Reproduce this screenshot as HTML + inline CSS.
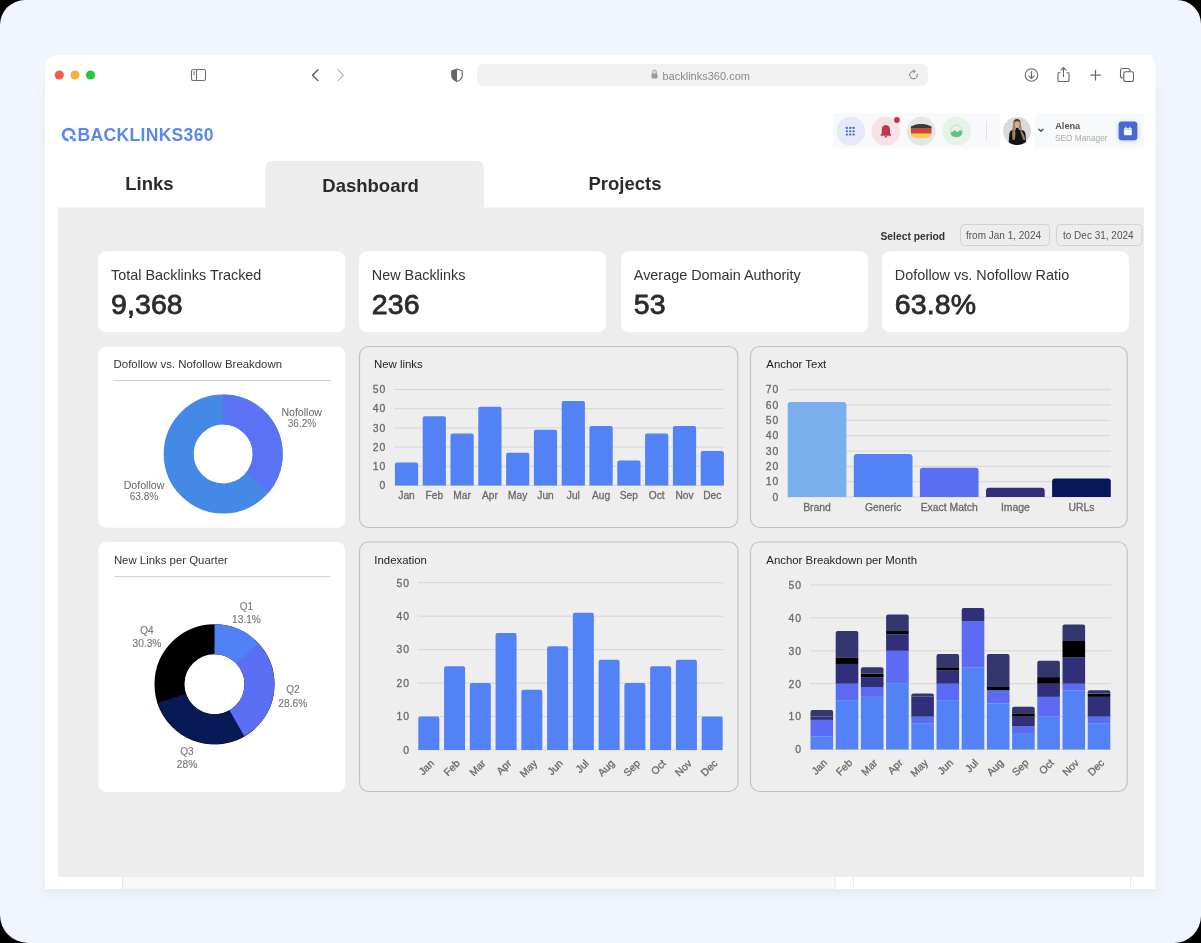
<!DOCTYPE html>
<html><head><meta charset="utf-8"><title>Backlinks360 Dashboard</title>
<style>
html,body{margin:0;padding:0;width:1201px;height:943px;overflow:hidden;background:#000;}
svg{display:block;font-family:"Liberation Sans", sans-serif;will-change:transform;}
</style></head><body>
<svg width="1201" height="943" viewBox="0 0 1201 943">
<defs>
<filter id="sh" x="-10%" y="-10%" width="120%" height="130%"><feGaussianBlur stdDeviation="5"/></filter>
<filter id="bsh" x="-50%" y="-50%" width="200%" height="200%"><feDropShadow dx="0" dy="1" stdDeviation="2" flood-color="#4767d4" flood-opacity="0.3"/></filter>
</defs>
<rect x="0" y="0" width="1201" height="943" fill="#000"/>
<path d="M0,25 A25,25 0 0 1 25,0 L1177,0 A24,24 0 0 1 1201,24 L1201,916 A27,27 0 0 1 1174,943 L28,943 A28,28 0 0 1 0,915 Z" fill="#f1f5fd"/>
<rect x="44" y="85" width="1114" height="810" fill="#e1e6f3" filter="url(#sh)" opacity="0.75"/>
<path d="M45,69 Q45,55 59,55 L1152,55 L1155.5,64 L1155.5,889 L45,889 Z" fill="#fff"/>
<circle cx="59.3" cy="75" r="4.6" fill="#f25a55"/>
<circle cx="75" cy="75" r="4.6" fill="#f6b23e"/>
<circle cx="90.5" cy="75" r="4.6" fill="#27c840"/>
<rect x="191.5" y="69.5" width="14" height="11" rx="1.8" fill="none" stroke="#6e6e6e" stroke-width="1.1"/>
<line x1="196.5" y1="69.5" x2="196.5" y2="80.5" stroke="#6e6e6e" stroke-width="1.1"/>
<rect x="193" y="71.6" width="2" height="1" fill="#6e6e6e"/><rect x="193" y="73.6" width="2" height="1" fill="#6e6e6e"/>
<path d="M318,69.8 L312.6,75.2 L318,80.6" fill="none" stroke="#555" stroke-width="1.3" stroke-linecap="round" stroke-linejoin="round"/>
<path d="M338,69.8 L343.4,75.2 L338,80.6" fill="none" stroke="#bbb" stroke-width="1.3" stroke-linecap="round" stroke-linejoin="round"/>
<path d="M457,69 L462.2,70.8 L462.2,75.5 Q462.2,79.5 457,81.6 Q451.8,79.5 451.8,75.5 L451.8,70.8 Z" fill="#fff" stroke="#666" stroke-width="1.1"/>
<path d="M457,69 L451.8,70.8 L451.8,75.5 Q451.8,79.5 457,81.6 Z" fill="#666"/>
<rect x="477.00" y="64.00" width="451.00" height="22.00" rx="6" fill="#f1f1f1" />
<rect x="651.5" y="73.5" width="6" height="5" rx="1" fill="#9a9a9a"/>
<path d="M652.8,73.8 L652.8,72 Q652.8,70 654.5,70 Q656.2,70 656.2,72 L656.2,73.8" fill="none" stroke="#9a9a9a" stroke-width="1.1"/>
<text x="662.50" y="79.80" font-size="11" fill="#8c8888" font-weight="normal" text-anchor="start" >backlinks360.com</text>
<path d="M917.2,74 A3.8,3.8 0 1 1 914.2,71.3" fill="none" stroke="#777" stroke-width="1"/>
<path d="M913,69.6 L915.3,71.3 L913.3,73.3" fill="none" stroke="#777" stroke-width="1"/>
<circle cx="1031.5" cy="75" r="6.3" fill="none" stroke="#666" stroke-width="1.1"/>
<path d="M1031.5,71.5 L1031.5,78.3 M1028.9,75.8 L1031.5,78.4 L1034.1,75.8" fill="none" stroke="#666" stroke-width="1.1" stroke-linecap="round"/>
<path d="M1060.5,72.8 L1058.5,72.8 Q1058,72.8 1058,73.5 L1058,80.8 Q1058,81.5 1058.7,81.5 L1068.3,81.5 Q1069,81.5 1069,80.8 L1069,73.5 Q1069,72.8 1068.5,72.8 L1066.5,72.8" fill="none" stroke="#666" stroke-width="1.1"/>
<path d="M1063.5,76.5 L1063.5,67.8 M1061,70.2 L1063.5,67.6 L1066,70.2" fill="none" stroke="#666" stroke-width="1.1" stroke-linecap="round"/>
<path d="M1095.5,70 L1095.5,80.5 M1090.2,75.2 L1100.8,75.2" stroke="#666" stroke-width="1.2"/>
<rect x="1120.5" y="68.5" width="9.5" height="9.5" rx="2" fill="#fff" stroke="#666" stroke-width="1.1"/>
<rect x="1123.8" y="71.8" width="9.7" height="9.7" rx="2" fill="#fff" stroke="#666" stroke-width="1.1"/>
<circle cx="68.6" cy="134.6" r="5.5" fill="none" stroke="#5b87f0" stroke-width="2.8" stroke-dasharray="25.9 8.64" transform="rotate(90 68.6 134.6)"/>
<rect x="69.70" y="136.10" width="3.30" height="3.00" rx="0" fill="#5b87f0" />
<rect x="72.50" y="138.40" width="3.20" height="2.90" rx="0" fill="#5b87f0" />
<text x="77.60" y="141.10" font-size="17.5" fill="#5b87f0" font-weight="bold" text-anchor="start" letter-spacing="0.33">BACKLINKS360</text>
<rect x="833.00" y="113.00" width="167.00" height="35.50" rx="0" fill="#f8f9fb" />
<rect x="1034.70" y="113.00" width="109.30" height="35.50" rx="0" fill="#f8f9fb" />
<circle cx="850.7" cy="131.2" r="14.4" fill="#e6eaf6"/>
<rect x="845.80" y="126.80" width="2.10" height="2.10" rx="0.4" fill="#4a6ad8" />
<rect x="845.80" y="130.15" width="2.10" height="2.10" rx="0.4" fill="#4a6ad8" />
<rect x="845.80" y="133.50" width="2.10" height="2.10" rx="0.4" fill="#4a6ad8" />
<rect x="849.15" y="126.80" width="2.10" height="2.10" rx="0.4" fill="#4a6ad8" />
<rect x="849.15" y="130.15" width="2.10" height="2.10" rx="0.4" fill="#4a6ad8" />
<rect x="849.15" y="133.50" width="2.10" height="2.10" rx="0.4" fill="#4a6ad8" />
<rect x="852.50" y="126.80" width="2.10" height="2.10" rx="0.4" fill="#4a6ad8" />
<rect x="852.50" y="130.15" width="2.10" height="2.10" rx="0.4" fill="#4a6ad8" />
<rect x="852.50" y="133.50" width="2.10" height="2.10" rx="0.4" fill="#4a6ad8" />
<circle cx="885.8" cy="131.2" r="14.4" fill="#f5e3e8"/>
<path d="M880.5,135.7 L891.2,135.7 L891,134.6 L890,133.6 L890,128.5 Q889.8,126 887,125.3 Q885.8,124.6 884.6,125.3 Q881.9,126 881.8,128.5 L881.8,133.6 L880.7,134.6 Z" fill="#c8344f"/>
<path d="M884.6,136 L887,136 L886.6,137.6 L885,137.6 Z" fill="#c8344f"/>
<circle cx="896.9" cy="120" r="2.9" fill="#c8344f"/>
<circle cx="921.3" cy="131.2" r="14.4" fill="#e6e6e6"/>
<clipPath id="flag"><path d="M910.7,126.5 Q921.2,121.2 931.7,126.5 L931.7,136 Q921.2,141.2 910.7,136 Z"/></clipPath>
<g clip-path="url(#flag)"><rect x="910.7" y="123.7" width="21" height="5" fill="#3a3a3a"/><rect x="910.7" y="128.7" width="21" height="5" fill="#dd3f33"/><rect x="910.7" y="133.7" width="21" height="5" fill="#f3cf4f"/></g>
<circle cx="956.7" cy="131.2" r="14.4" fill="#e5f3e9"/>
<circle cx="956.4" cy="131.1" r="5.9" fill="none" stroke="#a8dcb6" stroke-width="0.8"/>
<path d="M950.6,132.4 Q952.5,132.3 953.6,130.9 Q954.8,129.6 956,130.9 L957.4,132.4 L958.9,130.9 Q960.1,129.7 961.3,130.7 L962.2,131.6 Q962.2,137.1 956.4,137.1 Q950.8,137 950.6,132.4 Z" fill="#63c283"/>
<line x1="986.5" y1="121.5" x2="986.5" y2="140" stroke="#e2e2e2" stroke-width="1"/>
<circle cx="1017" cy="131" r="14" fill="#d9d9de"/>
<clipPath id="av"><circle cx="1017" cy="131" r="14"/></clipPath>
<g clip-path="url(#av)"><path d="M1008.5,146 L1009.3,134 Q1010,130.2 1013,129.8 L1021,129.8 Q1024.8,130.2 1025.5,134 L1026.5,146 Z" fill="#141414"/><path d="M1012.4,139.8 L1012.2,133 L1013,124.5 Q1013.3,119.2 1017,119 Q1020.6,119.2 1021,124.5 L1021.8,131 L1024,135 L1025.6,140.2 L1023,139.5 L1020.6,132 L1019.8,128.5 L1015,128.5 L1015.6,134 L1014.6,140 Z" fill="#9f8260"/><path d="M1013.2,123 Q1013.6,119.2 1017,119 Q1020.4,119.2 1020.8,123 L1019.8,121.6 Q1017,120.4 1014.2,121.6 Z" fill="#4e3f30"/><ellipse cx="1017.2" cy="124.8" rx="2.3" ry="3.2" fill="#cfae98"/><rect x="1015.8" y="128" width="2.8" height="18" fill="#141414"/></g>
<path d="M1038.8,129.2 L1040.9,131.2 L1043,129.2" fill="none" stroke="#555" stroke-width="1.5" stroke-linecap="round"/>
<text x="1055.20" y="128.60" font-size="9.2" fill="#555" font-weight="bold" text-anchor="start" >Alena</text>
<text x="1055.00" y="141.00" font-size="8.3" fill="#aaa" font-weight="normal" text-anchor="start" >SEO Manager</text>
<rect x="1118.6" y="121.5" width="18.7" height="18.7" rx="3" fill="#4767d4" filter="url(#bsh)"/>
<rect x="1123.9" y="128.2" width="7.9" height="7.1" rx="0.7" fill="#fff"/>
<rect x="1125.3" y="126.8" width="1.1" height="2" fill="#fff"/><rect x="1129.3" y="126.8" width="1.1" height="2" fill="#fff"/>
<rect x="1123.9" y="129.5" width="7.9" height="0.6" fill="#8fa2e6"/>
<text x="125.20" y="190.20" font-size="18.5" fill="#2b2b2b" font-weight="bold" text-anchor="start" >Links</text>
<path d="M265.20,208.30 L265.20,168.80 Q265.20,160.80 273.20,160.80 L476.00,160.80 Q484.00,160.80 484.00,168.80 L484.00,208.30 Z" fill="#ededed"/>
<text x="322.30" y="191.60" font-size="18.5" fill="#2b2b2b" font-weight="bold" text-anchor="start" >Dashboard</text>
<text x="588.50" y="190.20" font-size="18.5" fill="#2b2b2b" font-weight="bold" text-anchor="start" >Projects</text>
<rect x="58.00" y="207.50" width="1086.00" height="669.50" rx="0" fill="#ededed" />
<rect x="122.50" y="877.00" width="712.50" height="12.00" rx="0" fill="#f8f8f8" />
<line x1="122.5" y1="877" x2="122.5" y2="889" stroke="#e6e6e6" stroke-width="1"/>
<line x1="835" y1="877" x2="835" y2="889" stroke="#e6e6e6" stroke-width="1"/>
<line x1="853.3" y1="877" x2="853.3" y2="889" stroke="#e6e6e6" stroke-width="1"/>
<line x1="1130.6" y1="877" x2="1130.6" y2="889" stroke="#e6e6e6" stroke-width="1"/>
<text x="880.50" y="240.40" font-size="10.3" fill="#333" font-weight="bold" text-anchor="start" >Select period</text>
<rect x="960.50" y="224.50" width="89.00" height="21.00" rx="4" fill="none" stroke="#d2d2d2" stroke-width="1"/>
<text x="966.00" y="238.60" font-size="10" fill="#555" font-weight="normal" text-anchor="start" >from Jan 1, 2024</text>
<rect x="1056.50" y="224.50" width="85.50" height="21.00" rx="4" fill="none" stroke="#d2d2d2" stroke-width="1"/>
<text x="1063.00" y="238.60" font-size="10" fill="#555" font-weight="normal" text-anchor="start" >to Dec 31, 2024</text>
<rect x="98.20" y="251.30" width="247.00" height="81.00" rx="8" fill="#fff" />
<text x="111.00" y="279.80" font-size="14.4" fill="#333" font-weight="normal" text-anchor="start" >Total Backlinks Tracked</text>
<text x="111.00" y="313.80" font-size="28.5" fill="#2b2b2b" font-weight="normal" text-anchor="start" letter-spacing="0.1" stroke="#2b2b2b" stroke-width="0.8">9,368</text>
<rect x="359.00" y="251.30" width="247.00" height="81.00" rx="8" fill="#fff" />
<text x="371.80" y="279.80" font-size="14.4" fill="#333" font-weight="normal" text-anchor="start" >New Backlinks</text>
<text x="371.80" y="313.80" font-size="28.5" fill="#2b2b2b" font-weight="normal" text-anchor="start" letter-spacing="0.1" stroke="#2b2b2b" stroke-width="0.8">236</text>
<rect x="621.00" y="251.30" width="247.00" height="81.00" rx="8" fill="#fff" />
<text x="633.80" y="279.80" font-size="14.4" fill="#333" font-weight="normal" text-anchor="start" >Average Domain Authority</text>
<text x="633.80" y="313.80" font-size="28.5" fill="#2b2b2b" font-weight="normal" text-anchor="start" letter-spacing="0.1" stroke="#2b2b2b" stroke-width="0.8">53</text>
<rect x="882.00" y="251.30" width="247.00" height="81.00" rx="8" fill="#fff" />
<text x="894.80" y="279.80" font-size="14.4" fill="#333" font-weight="normal" text-anchor="start" >Dofollow vs. Nofollow Ratio</text>
<text x="894.80" y="313.80" font-size="28.5" fill="#2b2b2b" font-weight="normal" text-anchor="start" letter-spacing="0.1" stroke="#2b2b2b" stroke-width="0.8">63.8%</text>
<rect x="98.30" y="346.70" width="246.90" height="181.00" rx="8" fill="#fff" />
<text x="113.60" y="368.10" font-size="11.4" fill="#333" font-weight="normal" text-anchor="start" >Dofollow vs. Nofollow Breakdown</text>
<line x1="113.6" y1="380.5" x2="331" y2="380.5" stroke="#cfcfcf" stroke-width="1"/>
<circle cx="223.2" cy="454" r="44.5" fill="none" stroke="#4589e6" stroke-width="30"/>
<path d="M223.20,394.50 A59.5,59.5 0 0 1 268.58,492.48 L245.70,473.08 A29.5,29.5 0 0 0 223.20,424.50 Z" fill="#5b72f5"/>
<text x="301.70" y="415.80" font-size="10.6" fill="#666" font-weight="normal" text-anchor="middle" >Nofollow</text>
<text x="302.00" y="427.00" font-size="10" fill="#666" font-weight="normal" text-anchor="middle" >36.2%</text>
<text x="144.00" y="489.00" font-size="10.6" fill="#666" font-weight="normal" text-anchor="middle" >Dofollow</text>
<text x="144.00" y="500.00" font-size="10" fill="#666" font-weight="normal" text-anchor="middle" >63.8%</text>
<rect x="98.40" y="542.00" width="246.60" height="250.00" rx="8" fill="#fff" />
<text x="113.90" y="563.90" font-size="11.4" fill="#333" font-weight="normal" text-anchor="start" >New Links per Quarter</text>
<line x1="114" y1="576.6" x2="330" y2="576.6" stroke="#cfcfcf" stroke-width="1"/>
<circle cx="214.5" cy="684.3" r="45" fill="none" stroke="#000" stroke-width="30"/>
<path d="M214.50,624.30 A60,60 0 0 1 259.06,644.12 L236.78,664.21 A30,30 0 0 0 214.50,654.30 Z" fill="#5081f5"/>
<path d="M258.50,643.50 A60,60 0 0 1 243.66,736.74 L229.08,710.52 A30,30 0 0 0 236.50,663.90 Z" fill="#5b6ff5"/>
<path d="M244.39,736.32 A60,60 0 0 1 157.53,703.12 L186.01,693.71 A30,30 0 0 0 229.45,710.31 Z" fill="#071a55"/>
<text x="246.50" y="609.50" font-size="10" fill="#7a7a7a" font-weight="normal" text-anchor="middle" stroke="#7a7a7a" stroke-width="0.15">Q1</text>
<text x="246.50" y="622.50" font-size="10.2" fill="#777" font-weight="normal" text-anchor="middle" stroke="#777" stroke-width="0.15">13.1%</text>
<text x="292.80" y="693.00" font-size="10" fill="#7a7a7a" font-weight="normal" text-anchor="middle" stroke="#7a7a7a" stroke-width="0.15">Q2</text>
<text x="292.80" y="706.50" font-size="10.2" fill="#777" font-weight="normal" text-anchor="middle" stroke="#777" stroke-width="0.15">28.6%</text>
<text x="187.00" y="755.00" font-size="10" fill="#7a7a7a" font-weight="normal" text-anchor="middle" stroke="#7a7a7a" stroke-width="0.15">Q3</text>
<text x="187.00" y="768.00" font-size="10.2" fill="#777" font-weight="normal" text-anchor="middle" stroke="#777" stroke-width="0.15">28%</text>
<text x="147.00" y="633.50" font-size="10" fill="#7a7a7a" font-weight="normal" text-anchor="middle" stroke="#7a7a7a" stroke-width="0.15">Q4</text>
<text x="147.00" y="646.50" font-size="10.2" fill="#777" font-weight="normal" text-anchor="middle" stroke="#777" stroke-width="0.15">30.3%</text>
<rect x="359.50" y="346.50" width="378.30" height="181.00" rx="9" fill="#eeeeee" stroke="#c2c2c2" stroke-width="1.2"/>
<rect x="750.50" y="346.50" width="376.70" height="181.00" rx="9" fill="#eeeeee" stroke="#c2c2c2" stroke-width="1.2"/>
<rect x="359.50" y="542.00" width="378.50" height="249.50" rx="9" fill="#eeeeee" stroke="#c2c2c2" stroke-width="1.2"/>
<rect x="750.50" y="542.00" width="376.70" height="249.50" rx="9" fill="#eeeeee" stroke="#c2c2c2" stroke-width="1.2"/>
<text x="374.00" y="368.30" font-size="11.4" fill="#222" font-weight="normal" text-anchor="start" >New links</text>
<line x1="394.3" y1="485.40" x2="724" y2="485.40" stroke="#d6d6d6" stroke-width="1"/>
<line x1="394.3" y1="466.22" x2="724" y2="466.22" stroke="#d6d6d6" stroke-width="1"/>
<line x1="394.3" y1="447.04" x2="724" y2="447.04" stroke="#d6d6d6" stroke-width="1"/>
<line x1="394.3" y1="427.86" x2="724" y2="427.86" stroke="#d6d6d6" stroke-width="1"/>
<line x1="394.3" y1="408.68" x2="724" y2="408.68" stroke="#d6d6d6" stroke-width="1"/>
<line x1="394.3" y1="389.50" x2="724" y2="389.50" stroke="#d6d6d6" stroke-width="1"/>
<text x="386.20" y="489.20" font-size="10.4" fill="#6a6a6a" font-weight="normal" text-anchor="end" letter-spacing="1.0" stroke="#6a6a6a" stroke-width="0.3">0</text>
<text x="386.20" y="470.02" font-size="10.4" fill="#6a6a6a" font-weight="normal" text-anchor="end" letter-spacing="1.0" stroke="#6a6a6a" stroke-width="0.3">10</text>
<text x="386.20" y="450.84" font-size="10.4" fill="#6a6a6a" font-weight="normal" text-anchor="end" letter-spacing="1.0" stroke="#6a6a6a" stroke-width="0.3">20</text>
<text x="386.20" y="431.66" font-size="10.4" fill="#6a6a6a" font-weight="normal" text-anchor="end" letter-spacing="1.0" stroke="#6a6a6a" stroke-width="0.3">30</text>
<text x="386.20" y="412.48" font-size="10.4" fill="#6a6a6a" font-weight="normal" text-anchor="end" letter-spacing="1.0" stroke="#6a6a6a" stroke-width="0.3">40</text>
<text x="386.20" y="393.30" font-size="10.4" fill="#6a6a6a" font-weight="normal" text-anchor="end" letter-spacing="1.0" stroke="#6a6a6a" stroke-width="0.3">50</text>
<path d="M394.90,485.40 L394.90,464.38 Q394.90,462.38 396.90,462.38 L416.10,462.38 Q418.10,462.38 418.10,464.38 L418.10,485.40 Z" fill="#5282f5"/>
<text x="406.50" y="499.00" font-size="10.2" fill="#6a6a6a" font-weight="normal" text-anchor="middle" stroke="#6a6a6a" stroke-width="0.3">Jan</text>
<path d="M422.70,485.40 L422.70,418.35 Q422.70,416.35 424.70,416.35 L443.90,416.35 Q445.90,416.35 445.90,418.35 L445.90,485.40 Z" fill="#5282f5"/>
<text x="434.30" y="499.00" font-size="10.2" fill="#6a6a6a" font-weight="normal" text-anchor="middle" stroke="#6a6a6a" stroke-width="0.3">Feb</text>
<path d="M450.50,485.40 L450.50,435.61 Q450.50,433.61 452.50,433.61 L471.70,433.61 Q473.70,433.61 473.70,435.61 L473.70,485.40 Z" fill="#5282f5"/>
<text x="462.10" y="499.00" font-size="10.2" fill="#6a6a6a" font-weight="normal" text-anchor="middle" stroke="#6a6a6a" stroke-width="0.3">Mar</text>
<path d="M478.30,485.40 L478.30,408.76 Q478.30,406.76 480.30,406.76 L499.50,406.76 Q501.50,406.76 501.50,408.76 L501.50,485.40 Z" fill="#5282f5"/>
<text x="489.90" y="499.00" font-size="10.2" fill="#6a6a6a" font-weight="normal" text-anchor="middle" stroke="#6a6a6a" stroke-width="0.3">Apr</text>
<path d="M506.10,485.40 L506.10,454.79 Q506.10,452.79 508.10,452.79 L527.30,452.79 Q529.30,452.79 529.30,454.79 L529.30,485.40 Z" fill="#5282f5"/>
<text x="517.70" y="499.00" font-size="10.2" fill="#6a6a6a" font-weight="normal" text-anchor="middle" stroke="#6a6a6a" stroke-width="0.3">May</text>
<path d="M533.90,485.40 L533.90,431.78 Q533.90,429.78 535.90,429.78 L555.10,429.78 Q557.10,429.78 557.10,431.78 L557.10,485.40 Z" fill="#5282f5"/>
<text x="545.50" y="499.00" font-size="10.2" fill="#6a6a6a" font-weight="normal" text-anchor="middle" stroke="#6a6a6a" stroke-width="0.3">Jun</text>
<path d="M561.70,485.40 L561.70,403.01 Q561.70,401.01 563.70,401.01 L582.90,401.01 Q584.90,401.01 584.90,403.01 L584.90,485.40 Z" fill="#5282f5"/>
<text x="573.30" y="499.00" font-size="10.2" fill="#6a6a6a" font-weight="normal" text-anchor="middle" stroke="#6a6a6a" stroke-width="0.3">Jul</text>
<path d="M589.50,485.40 L589.50,427.94 Q589.50,425.94 591.50,425.94 L610.70,425.94 Q612.70,425.94 612.70,427.94 L612.70,485.40 Z" fill="#5282f5"/>
<text x="601.10" y="499.00" font-size="10.2" fill="#6a6a6a" font-weight="normal" text-anchor="middle" stroke="#6a6a6a" stroke-width="0.3">Aug</text>
<path d="M617.30,485.40 L617.30,462.47 Q617.30,460.47 619.30,460.47 L638.50,460.47 Q640.50,460.47 640.50,462.47 L640.50,485.40 Z" fill="#5282f5"/>
<text x="628.90" y="499.00" font-size="10.2" fill="#6a6a6a" font-weight="normal" text-anchor="middle" stroke="#6a6a6a" stroke-width="0.3">Sep</text>
<path d="M645.10,485.40 L645.10,435.61 Q645.10,433.61 647.10,433.61 L666.30,433.61 Q668.30,433.61 668.30,435.61 L668.30,485.40 Z" fill="#5282f5"/>
<text x="656.70" y="499.00" font-size="10.2" fill="#6a6a6a" font-weight="normal" text-anchor="middle" stroke="#6a6a6a" stroke-width="0.3">Oct</text>
<path d="M672.90,485.40 L672.90,427.94 Q672.90,425.94 674.90,425.94 L694.10,425.94 Q696.10,425.94 696.10,427.94 L696.10,485.40 Z" fill="#5282f5"/>
<text x="684.50" y="499.00" font-size="10.2" fill="#6a6a6a" font-weight="normal" text-anchor="middle" stroke="#6a6a6a" stroke-width="0.3">Nov</text>
<path d="M700.70,485.40 L700.70,452.88 Q700.70,450.88 702.70,450.88 L721.90,450.88 Q723.90,450.88 723.90,452.88 L723.90,485.40 Z" fill="#5282f5"/>
<text x="712.30" y="499.00" font-size="10.2" fill="#6a6a6a" font-weight="normal" text-anchor="middle" stroke="#6a6a6a" stroke-width="0.3">Dec</text>
<text x="766.30" y="368.30" font-size="11.4" fill="#222" font-weight="normal" text-anchor="start" >Anchor Text</text>
<line x1="787.7" y1="497.00" x2="1110.7" y2="497.00" stroke="#d6d6d6" stroke-width="1"/>
<line x1="787.7" y1="481.67" x2="1110.7" y2="481.67" stroke="#d6d6d6" stroke-width="1"/>
<line x1="787.7" y1="466.34" x2="1110.7" y2="466.34" stroke="#d6d6d6" stroke-width="1"/>
<line x1="787.7" y1="451.01" x2="1110.7" y2="451.01" stroke="#d6d6d6" stroke-width="1"/>
<line x1="787.7" y1="435.68" x2="1110.7" y2="435.68" stroke="#d6d6d6" stroke-width="1"/>
<line x1="787.7" y1="420.35" x2="1110.7" y2="420.35" stroke="#d6d6d6" stroke-width="1"/>
<line x1="787.7" y1="405.02" x2="1110.7" y2="405.02" stroke="#d6d6d6" stroke-width="1"/>
<line x1="787.7" y1="389.69" x2="1110.7" y2="389.69" stroke="#d6d6d6" stroke-width="1"/>
<text x="779.30" y="500.80" font-size="10.4" fill="#6a6a6a" font-weight="normal" text-anchor="end" letter-spacing="1.0" stroke="#6a6a6a" stroke-width="0.3">0</text>
<text x="779.30" y="485.47" font-size="10.4" fill="#6a6a6a" font-weight="normal" text-anchor="end" letter-spacing="1.0" stroke="#6a6a6a" stroke-width="0.3">10</text>
<text x="779.30" y="470.14" font-size="10.4" fill="#6a6a6a" font-weight="normal" text-anchor="end" letter-spacing="1.0" stroke="#6a6a6a" stroke-width="0.3">20</text>
<text x="779.30" y="454.81" font-size="10.4" fill="#6a6a6a" font-weight="normal" text-anchor="end" letter-spacing="1.0" stroke="#6a6a6a" stroke-width="0.3">30</text>
<text x="779.30" y="439.48" font-size="10.4" fill="#6a6a6a" font-weight="normal" text-anchor="end" letter-spacing="1.0" stroke="#6a6a6a" stroke-width="0.3">40</text>
<text x="779.30" y="424.15" font-size="10.4" fill="#6a6a6a" font-weight="normal" text-anchor="end" letter-spacing="1.0" stroke="#6a6a6a" stroke-width="0.3">50</text>
<text x="779.30" y="408.82" font-size="10.4" fill="#6a6a6a" font-weight="normal" text-anchor="end" letter-spacing="1.0" stroke="#6a6a6a" stroke-width="0.3">60</text>
<text x="779.30" y="393.49" font-size="10.4" fill="#6a6a6a" font-weight="normal" text-anchor="end" letter-spacing="1.0" stroke="#6a6a6a" stroke-width="0.3">70</text>
<path d="M787.70,497.00 L787.70,404.95 Q787.70,401.95 790.70,401.95 L843.40,401.95 Q846.40,401.95 846.40,404.95 L846.40,497.00 Z" fill="#7aaeec"/>
<text x="817.05" y="511.20" font-size="10.4" fill="#6a6a6a" font-weight="normal" text-anchor="middle" stroke="#6a6a6a" stroke-width="0.3">Brand</text>
<path d="M853.80,497.00 L853.80,457.08 Q853.80,454.08 856.80,454.08 L909.50,454.08 Q912.50,454.08 912.50,457.08 L912.50,497.00 Z" fill="#5282f5"/>
<text x="883.15" y="511.20" font-size="10.4" fill="#6a6a6a" font-weight="normal" text-anchor="middle" stroke="#6a6a6a" stroke-width="0.3">Generic</text>
<path d="M919.90,497.00 L919.90,470.87 Q919.90,467.87 922.90,467.87 L975.60,467.87 Q978.60,467.87 978.60,470.87 L978.60,497.00 Z" fill="#5b6ff5"/>
<text x="949.25" y="511.20" font-size="10.4" fill="#6a6a6a" font-weight="normal" text-anchor="middle" stroke="#6a6a6a" stroke-width="0.3">Exact Match</text>
<path d="M986.00,497.00 L986.00,490.80 Q986.00,487.80 989.00,487.80 L1041.70,487.80 Q1044.70,487.80 1044.70,490.80 L1044.70,497.00 Z" fill="#312e7c"/>
<text x="1015.35" y="511.20" font-size="10.4" fill="#6a6a6a" font-weight="normal" text-anchor="middle" stroke="#6a6a6a" stroke-width="0.3">Image</text>
<path d="M1052.10,497.00 L1052.10,481.60 Q1052.10,478.60 1055.10,478.60 L1107.80,478.60 Q1110.80,478.60 1110.80,481.60 L1110.80,497.00 Z" fill="#08175a"/>
<text x="1081.45" y="511.20" font-size="10.4" fill="#6a6a6a" font-weight="normal" text-anchor="middle" stroke="#6a6a6a" stroke-width="0.3">URLs</text>
<text x="374.30" y="564.30" font-size="11.4" fill="#222" font-weight="normal" text-anchor="start" >Indexation</text>
<line x1="417.7" y1="750.00" x2="723.3" y2="750.00" stroke="#d6d6d6" stroke-width="1"/>
<line x1="417.7" y1="716.54" x2="723.3" y2="716.54" stroke="#d6d6d6" stroke-width="1"/>
<line x1="417.7" y1="683.08" x2="723.3" y2="683.08" stroke="#d6d6d6" stroke-width="1"/>
<line x1="417.7" y1="649.62" x2="723.3" y2="649.62" stroke="#d6d6d6" stroke-width="1"/>
<line x1="417.7" y1="616.16" x2="723.3" y2="616.16" stroke="#d6d6d6" stroke-width="1"/>
<line x1="417.7" y1="582.70" x2="723.3" y2="582.70" stroke="#d6d6d6" stroke-width="1"/>
<text x="410.00" y="753.80" font-size="10.4" fill="#6a6a6a" font-weight="normal" text-anchor="end" letter-spacing="1.0" stroke="#6a6a6a" stroke-width="0.3">0</text>
<text x="410.00" y="720.34" font-size="10.4" fill="#6a6a6a" font-weight="normal" text-anchor="end" letter-spacing="1.0" stroke="#6a6a6a" stroke-width="0.3">10</text>
<text x="410.00" y="686.88" font-size="10.4" fill="#6a6a6a" font-weight="normal" text-anchor="end" letter-spacing="1.0" stroke="#6a6a6a" stroke-width="0.3">20</text>
<text x="410.00" y="653.42" font-size="10.4" fill="#6a6a6a" font-weight="normal" text-anchor="end" letter-spacing="1.0" stroke="#6a6a6a" stroke-width="0.3">30</text>
<text x="410.00" y="619.96" font-size="10.4" fill="#6a6a6a" font-weight="normal" text-anchor="end" letter-spacing="1.0" stroke="#6a6a6a" stroke-width="0.3">40</text>
<text x="410.00" y="586.50" font-size="10.4" fill="#6a6a6a" font-weight="normal" text-anchor="end" letter-spacing="1.0" stroke="#6a6a6a" stroke-width="0.3">50</text>
<path d="M418.30,750.00 L418.30,718.54 Q418.30,716.54 420.30,716.54 L437.30,716.54 Q439.30,716.54 439.30,718.54 L439.30,750.00 Z" fill="#5282f5"/>
<text x="434.80" y="764.00" font-size="10.4" fill="#6a6a6a" stroke="#6a6a6a" stroke-width="0.3" text-anchor="end" transform="rotate(-45 434.80 764.00)">Jan</text>
<path d="M444.06,750.00 L444.06,668.35 Q444.06,666.35 446.06,666.35 L463.06,666.35 Q465.06,666.35 465.06,668.35 L465.06,750.00 Z" fill="#5282f5"/>
<text x="460.56" y="764.00" font-size="10.4" fill="#6a6a6a" stroke="#6a6a6a" stroke-width="0.3" text-anchor="end" transform="rotate(-45 460.56 764.00)">Feb</text>
<path d="M469.82,750.00 L469.82,685.08 Q469.82,683.08 471.82,683.08 L488.82,683.08 Q490.82,683.08 490.82,685.08 L490.82,750.00 Z" fill="#5282f5"/>
<text x="486.32" y="764.00" font-size="10.4" fill="#6a6a6a" stroke="#6a6a6a" stroke-width="0.3" text-anchor="end" transform="rotate(-45 486.32 764.00)">Mar</text>
<path d="M495.58,750.00 L495.58,634.89 Q495.58,632.89 497.58,632.89 L514.58,632.89 Q516.58,632.89 516.58,634.89 L516.58,750.00 Z" fill="#5282f5"/>
<text x="512.08" y="764.00" font-size="10.4" fill="#6a6a6a" stroke="#6a6a6a" stroke-width="0.3" text-anchor="end" transform="rotate(-45 512.08 764.00)">Apr</text>
<path d="M521.34,750.00 L521.34,691.77 Q521.34,689.77 523.34,689.77 L540.34,689.77 Q542.34,689.77 542.34,691.77 L542.34,750.00 Z" fill="#5282f5"/>
<text x="537.84" y="764.00" font-size="10.4" fill="#6a6a6a" stroke="#6a6a6a" stroke-width="0.3" text-anchor="end" transform="rotate(-45 537.84 764.00)">May</text>
<path d="M547.10,750.00 L547.10,648.27 Q547.10,646.27 549.10,646.27 L566.10,646.27 Q568.10,646.27 568.10,648.27 L568.10,750.00 Z" fill="#5282f5"/>
<text x="563.60" y="764.00" font-size="10.4" fill="#6a6a6a" stroke="#6a6a6a" stroke-width="0.3" text-anchor="end" transform="rotate(-45 563.60 764.00)">Jun</text>
<path d="M572.86,750.00 L572.86,614.81 Q572.86,612.81 574.86,612.81 L591.86,612.81 Q593.86,612.81 593.86,614.81 L593.86,750.00 Z" fill="#5282f5"/>
<text x="589.36" y="764.00" font-size="10.4" fill="#6a6a6a" stroke="#6a6a6a" stroke-width="0.3" text-anchor="end" transform="rotate(-45 589.36 764.00)">Jul</text>
<path d="M598.62,750.00 L598.62,661.66 Q598.62,659.66 600.62,659.66 L617.62,659.66 Q619.62,659.66 619.62,661.66 L619.62,750.00 Z" fill="#5282f5"/>
<text x="615.12" y="764.00" font-size="10.4" fill="#6a6a6a" stroke="#6a6a6a" stroke-width="0.3" text-anchor="end" transform="rotate(-45 615.12 764.00)">Aug</text>
<path d="M624.38,750.00 L624.38,685.08 Q624.38,683.08 626.38,683.08 L643.38,683.08 Q645.38,683.08 645.38,685.08 L645.38,750.00 Z" fill="#5282f5"/>
<text x="640.88" y="764.00" font-size="10.4" fill="#6a6a6a" stroke="#6a6a6a" stroke-width="0.3" text-anchor="end" transform="rotate(-45 640.88 764.00)">Sep</text>
<path d="M650.14,750.00 L650.14,668.35 Q650.14,666.35 652.14,666.35 L669.14,666.35 Q671.14,666.35 671.14,668.35 L671.14,750.00 Z" fill="#5282f5"/>
<text x="666.64" y="764.00" font-size="10.4" fill="#6a6a6a" stroke="#6a6a6a" stroke-width="0.3" text-anchor="end" transform="rotate(-45 666.64 764.00)">Oct</text>
<path d="M675.90,750.00 L675.90,661.66 Q675.90,659.66 677.90,659.66 L694.90,659.66 Q696.90,659.66 696.90,661.66 L696.90,750.00 Z" fill="#5282f5"/>
<text x="692.40" y="764.00" font-size="10.4" fill="#6a6a6a" stroke="#6a6a6a" stroke-width="0.3" text-anchor="end" transform="rotate(-45 692.40 764.00)">Nov</text>
<path d="M701.66,750.00 L701.66,718.54 Q701.66,716.54 703.66,716.54 L720.66,716.54 Q722.66,716.54 722.66,718.54 L722.66,750.00 Z" fill="#5282f5"/>
<text x="718.16" y="764.00" font-size="10.4" fill="#6a6a6a" stroke="#6a6a6a" stroke-width="0.3" text-anchor="end" transform="rotate(-45 718.16 764.00)">Dec</text>
<text x="766.30" y="564.30" font-size="11.4" fill="#222" font-weight="normal" text-anchor="start" >Anchor Breakdown per Month</text>
<line x1="810" y1="749.50" x2="1111" y2="749.50" stroke="#d6d6d6" stroke-width="1"/>
<line x1="810" y1="716.60" x2="1111" y2="716.60" stroke="#d6d6d6" stroke-width="1"/>
<line x1="810" y1="683.70" x2="1111" y2="683.70" stroke="#d6d6d6" stroke-width="1"/>
<line x1="810" y1="650.80" x2="1111" y2="650.80" stroke="#d6d6d6" stroke-width="1"/>
<line x1="810" y1="617.90" x2="1111" y2="617.90" stroke="#d6d6d6" stroke-width="1"/>
<line x1="810" y1="585.00" x2="1111" y2="585.00" stroke="#d6d6d6" stroke-width="1"/>
<text x="802.00" y="753.30" font-size="10.4" fill="#6a6a6a" font-weight="normal" text-anchor="end" letter-spacing="1.0" stroke="#6a6a6a" stroke-width="0.3">0</text>
<text x="802.00" y="720.40" font-size="10.4" fill="#6a6a6a" font-weight="normal" text-anchor="end" letter-spacing="1.0" stroke="#6a6a6a" stroke-width="0.3">10</text>
<text x="802.00" y="687.50" font-size="10.4" fill="#6a6a6a" font-weight="normal" text-anchor="end" letter-spacing="1.0" stroke="#6a6a6a" stroke-width="0.3">20</text>
<text x="802.00" y="654.60" font-size="10.4" fill="#6a6a6a" font-weight="normal" text-anchor="end" letter-spacing="1.0" stroke="#6a6a6a" stroke-width="0.3">30</text>
<text x="802.00" y="621.70" font-size="10.4" fill="#6a6a6a" font-weight="normal" text-anchor="end" letter-spacing="1.0" stroke="#6a6a6a" stroke-width="0.3">40</text>
<text x="802.00" y="588.80" font-size="10.4" fill="#6a6a6a" font-weight="normal" text-anchor="end" letter-spacing="1.0" stroke="#6a6a6a" stroke-width="0.3">50</text>
<rect x="810.50" y="736.34" width="22.60" height="13.16" rx="0" fill="#5282f5" />
<rect x="810.50" y="719.89" width="22.60" height="16.45" rx="0" fill="#5b6bf3" />
<rect x="810.50" y="716.60" width="22.60" height="3.29" rx="0" fill="#2f2f7a" />
<path d="M810.50,716.60 L810.50,712.02 Q810.50,710.02 812.50,710.02 L831.10,710.02 Q833.10,710.02 833.10,712.02 L833.10,716.60 Z" fill="#34366e"/>
<text x="827.80" y="763.50" font-size="10.4" fill="#6a6a6a" stroke="#6a6a6a" stroke-width="0.3" text-anchor="end" transform="rotate(-45 827.80 763.50)">Jan</text>
<rect x="835.70" y="700.15" width="22.60" height="49.35" rx="0" fill="#5282f5" />
<rect x="835.70" y="683.70" width="22.60" height="16.45" rx="0" fill="#5b6bf3" />
<rect x="835.70" y="663.96" width="22.60" height="19.74" rx="0" fill="#2f2f7a" />
<rect x="835.70" y="657.38" width="22.60" height="6.58" rx="0" fill="#000000" />
<path d="M835.70,657.38 L835.70,633.06 Q835.70,631.06 837.70,631.06 L856.30,631.06 Q858.30,631.06 858.30,633.06 L858.30,657.38 Z" fill="#34366e"/>
<text x="853.00" y="763.50" font-size="10.4" fill="#6a6a6a" stroke="#6a6a6a" stroke-width="0.3" text-anchor="end" transform="rotate(-45 853.00 763.50)">Feb</text>
<rect x="860.90" y="696.86" width="22.60" height="52.64" rx="0" fill="#5282f5" />
<rect x="860.90" y="686.99" width="22.60" height="9.87" rx="0" fill="#5b6bf3" />
<rect x="860.90" y="677.12" width="22.60" height="9.87" rx="0" fill="#2f2f7a" />
<rect x="860.90" y="673.83" width="22.60" height="3.29" rx="0" fill="#000000" />
<path d="M860.90,673.83 L860.90,669.25 Q860.90,667.25 862.90,667.25 L881.50,667.25 Q883.50,667.25 883.50,669.25 L883.50,673.83 Z" fill="#34366e"/>
<text x="878.20" y="763.50" font-size="10.4" fill="#6a6a6a" stroke="#6a6a6a" stroke-width="0.3" text-anchor="end" transform="rotate(-45 878.20 763.50)">Mar</text>
<rect x="886.10" y="683.70" width="22.60" height="65.80" rx="0" fill="#5282f5" />
<rect x="886.10" y="650.80" width="22.60" height="32.90" rx="0" fill="#5b6bf3" />
<rect x="886.10" y="634.35" width="22.60" height="16.45" rx="0" fill="#2f2f7a" />
<rect x="886.10" y="631.06" width="22.60" height="3.29" rx="0" fill="#000000" />
<path d="M886.10,631.06 L886.10,616.61 Q886.10,614.61 888.10,614.61 L906.70,614.61 Q908.70,614.61 908.70,616.61 L908.70,631.06 Z" fill="#34366e"/>
<text x="903.40" y="763.50" font-size="10.4" fill="#6a6a6a" stroke="#6a6a6a" stroke-width="0.3" text-anchor="end" transform="rotate(-45 903.40 763.50)">Apr</text>
<rect x="911.30" y="723.18" width="22.60" height="26.32" rx="0" fill="#5282f5" />
<rect x="911.30" y="716.60" width="22.60" height="6.58" rx="0" fill="#5b6bf3" />
<rect x="911.30" y="696.86" width="22.60" height="19.74" rx="0" fill="#2f2f7a" />
<path d="M911.30,696.86 L911.30,695.57 Q911.30,693.57 913.30,693.57 L931.90,693.57 Q933.90,693.57 933.90,695.57 L933.90,696.86 Z" fill="#34366e"/>
<text x="928.60" y="763.50" font-size="10.4" fill="#6a6a6a" stroke="#6a6a6a" stroke-width="0.3" text-anchor="end" transform="rotate(-45 928.60 763.50)">May</text>
<rect x="936.50" y="700.15" width="22.60" height="49.35" rx="0" fill="#5282f5" />
<rect x="936.50" y="683.70" width="22.60" height="16.45" rx="0" fill="#5b6bf3" />
<rect x="936.50" y="670.54" width="22.60" height="13.16" rx="0" fill="#2f2f7a" />
<rect x="936.50" y="667.25" width="22.60" height="3.29" rx="0" fill="#000000" />
<path d="M936.50,667.25 L936.50,656.09 Q936.50,654.09 938.50,654.09 L957.10,654.09 Q959.10,654.09 959.10,656.09 L959.10,667.25 Z" fill="#34366e"/>
<text x="953.80" y="763.50" font-size="10.4" fill="#6a6a6a" stroke="#6a6a6a" stroke-width="0.3" text-anchor="end" transform="rotate(-45 953.80 763.50)">Jun</text>
<rect x="961.70" y="667.25" width="22.60" height="82.25" rx="0" fill="#5282f5" />
<rect x="961.70" y="621.19" width="22.60" height="46.06" rx="0" fill="#5b6bf3" />
<path d="M961.70,621.19 L961.70,610.03 Q961.70,608.03 963.70,608.03 L982.30,608.03 Q984.30,608.03 984.30,610.03 L984.30,621.19 Z" fill="#2f2f7a"/>
<text x="979.00" y="763.50" font-size="10.4" fill="#6a6a6a" stroke="#6a6a6a" stroke-width="0.3" text-anchor="end" transform="rotate(-45 979.00 763.50)">Jul</text>
<rect x="986.90" y="703.44" width="22.60" height="46.06" rx="0" fill="#5282f5" />
<rect x="986.90" y="690.28" width="22.60" height="13.16" rx="0" fill="#5b6bf3" />
<rect x="986.90" y="686.99" width="22.60" height="3.29" rx="0" fill="#000000" />
<path d="M986.90,686.99 L986.90,656.09 Q986.90,654.09 988.90,654.09 L1007.50,654.09 Q1009.50,654.09 1009.50,656.09 L1009.50,686.99 Z" fill="#34366e"/>
<text x="1004.20" y="763.50" font-size="10.4" fill="#6a6a6a" stroke="#6a6a6a" stroke-width="0.3" text-anchor="end" transform="rotate(-45 1004.20 763.50)">Aug</text>
<rect x="1012.10" y="733.05" width="22.60" height="16.45" rx="0" fill="#5282f5" />
<rect x="1012.10" y="726.47" width="22.60" height="6.58" rx="0" fill="#5b6bf3" />
<rect x="1012.10" y="716.60" width="22.60" height="9.87" rx="0" fill="#2f2f7a" />
<rect x="1012.10" y="713.31" width="22.60" height="3.29" rx="0" fill="#000000" />
<path d="M1012.10,713.31 L1012.10,708.73 Q1012.10,706.73 1014.10,706.73 L1032.70,706.73 Q1034.70,706.73 1034.70,708.73 L1034.70,713.31 Z" fill="#34366e"/>
<text x="1029.40" y="763.50" font-size="10.4" fill="#6a6a6a" stroke="#6a6a6a" stroke-width="0.3" text-anchor="end" transform="rotate(-45 1029.40 763.50)">Sep</text>
<rect x="1037.30" y="716.60" width="22.60" height="32.90" rx="0" fill="#5282f5" />
<rect x="1037.30" y="696.86" width="22.60" height="19.74" rx="0" fill="#5b6bf3" />
<rect x="1037.30" y="683.70" width="22.60" height="13.16" rx="0" fill="#2f2f7a" />
<rect x="1037.30" y="677.12" width="22.60" height="6.58" rx="0" fill="#000000" />
<path d="M1037.30,677.12 L1037.30,662.67 Q1037.30,660.67 1039.30,660.67 L1057.90,660.67 Q1059.90,660.67 1059.90,662.67 L1059.90,677.12 Z" fill="#34366e"/>
<text x="1054.60" y="763.50" font-size="10.4" fill="#6a6a6a" stroke="#6a6a6a" stroke-width="0.3" text-anchor="end" transform="rotate(-45 1054.60 763.50)">Oct</text>
<rect x="1062.50" y="690.28" width="22.60" height="59.22" rx="0" fill="#5282f5" />
<rect x="1062.50" y="683.70" width="22.60" height="6.58" rx="0" fill="#5b6bf3" />
<rect x="1062.50" y="657.38" width="22.60" height="26.32" rx="0" fill="#2f2f7a" />
<rect x="1062.50" y="640.93" width="22.60" height="16.45" rx="0" fill="#000000" />
<path d="M1062.50,640.93 L1062.50,626.48 Q1062.50,624.48 1064.50,624.48 L1083.10,624.48 Q1085.10,624.48 1085.10,626.48 L1085.10,640.93 Z" fill="#34366e"/>
<text x="1079.80" y="763.50" font-size="10.4" fill="#6a6a6a" stroke="#6a6a6a" stroke-width="0.3" text-anchor="end" transform="rotate(-45 1079.80 763.50)">Nov</text>
<rect x="1087.70" y="723.18" width="22.60" height="26.32" rx="0" fill="#5282f5" />
<rect x="1087.70" y="716.60" width="22.60" height="6.58" rx="0" fill="#5b6bf3" />
<rect x="1087.70" y="696.86" width="22.60" height="19.74" rx="0" fill="#2f2f7a" />
<rect x="1087.70" y="693.57" width="22.60" height="3.29" rx="0" fill="#000000" />
<path d="M1087.70,693.57 L1087.70,692.28 Q1087.70,690.28 1089.70,690.28 L1108.30,690.28 Q1110.30,690.28 1110.30,692.28 L1110.30,693.57 Z" fill="#34366e"/>
<text x="1105.00" y="763.50" font-size="10.4" fill="#6a6a6a" stroke="#6a6a6a" stroke-width="0.3" text-anchor="end" transform="rotate(-45 1105.00 763.50)">Dec</text>
</svg>
</body></html>
